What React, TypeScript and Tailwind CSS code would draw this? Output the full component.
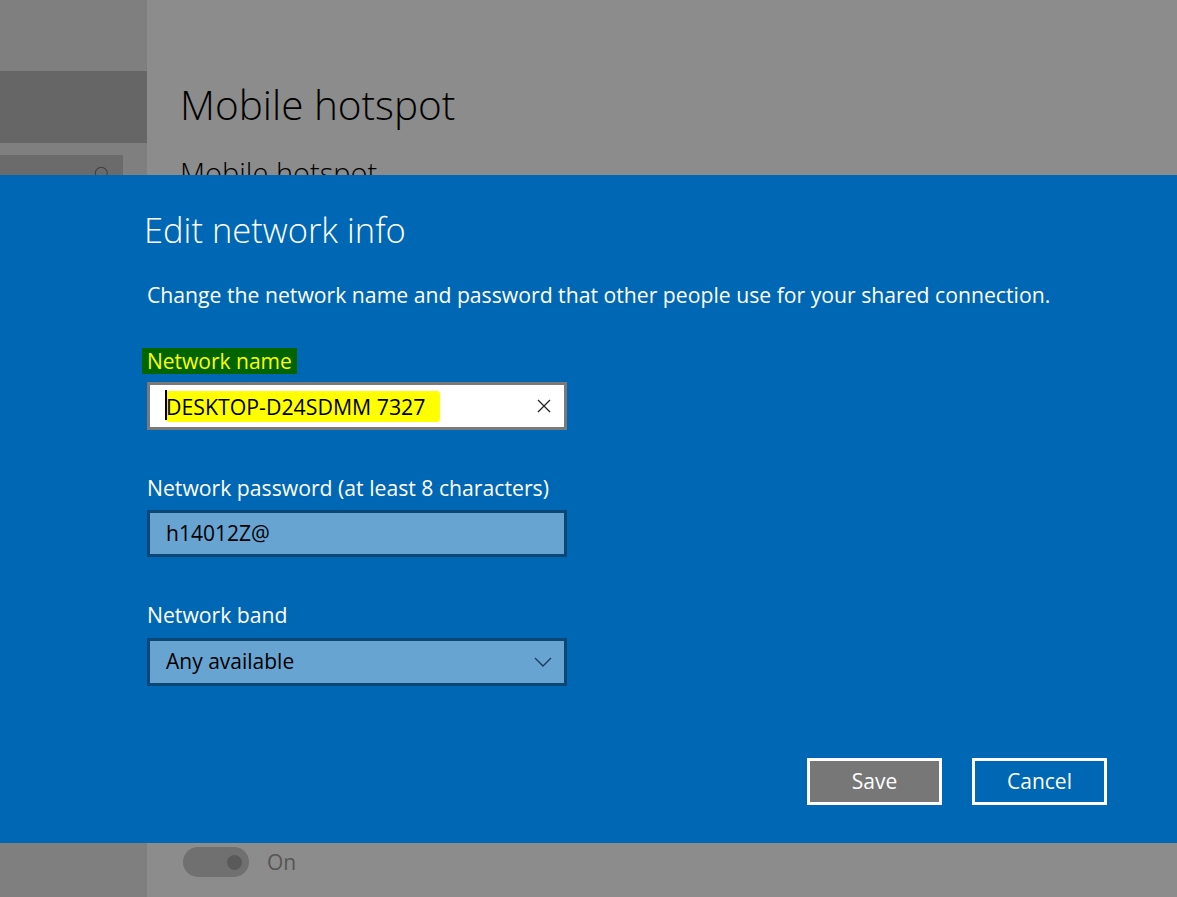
import { Search } from 'lucide-react';

const font = { fontFamily: '"Open Sans", "Noto Sans", sans-serif' };

function ClearIcon() {
  return (
    <svg width="14" height="14" viewBox="0 0 14 14" className="shrink-0">
      <path d="M1 1 L13 13 M13 1 L1 13" stroke="#222" strokeWidth="1.3" />
    </svg>
  );
}

function Chevron() {
  return (
    <svg width="18" height="10" viewBox="0 0 18 10" className="shrink-0">
      <path d="M1 1 L9 9 L17 1" stroke="#1b3a57" strokeWidth="1.3" fill="none" />
    </svg>
  );
}

export default function App() {
  return (
    <div className="relative flex h-[897px] w-[1177px] overflow-hidden" style={font}>
      {/* sidebar */}
      <div className="flex w-[147px] shrink-0 flex-col bg-[#7f7f7f]">
        <div className="mt-[71px] h-[72px] bg-[#666666]" />
        <div className="mt-[12px] flex h-[40px] w-[123px] items-start justify-end bg-[#6b6b6b] pr-[12px] pt-[10px]">
          <Search size={18} strokeWidth={1.4} className="text-[#3f3f3f]" />
        </div>
      </div>

      {/* page behind */}
      <div className="flex flex-1 flex-col bg-[#8c8c8c] pl-[33px] pb-[19px]">
        <h1 className="mt-[75px] text-[40.5px] font-light leading-[60px] text-black">Mobile hotspot</h1>
        <h2 className="mt-[20px] text-[29px] font-light leading-[36px] text-black">Mobile hotspot</h2>
        <div className="ml-[3px] mt-auto flex items-center gap-[18px]">
          <div className="flex h-[30px] w-[66px] items-center justify-end rounded-full bg-[#707070] pr-[7px]">
            <div className="h-[15px] w-[15px] rounded-full bg-[#5a5a5a]" />
          </div>
          <span className="text-[21px] text-[#555555]">On</span>
        </div>
      </div>

      {/* dialog */}
      <div className="absolute inset-x-0 top-[175px] flex h-[668px] flex-col bg-[#0067b4] pl-[147px] text-white">
        <h3 className="ml-[-3px] mt-[30px] text-[34.5px] font-light leading-[50px]">Edit network info</h3>
        <p className="mt-[26px] text-[21.2px] leading-[28px]">
          Change the network name and password that other people use for your shared connection.
        </p>

        <div className="ml-[-5px] mt-[39px] h-[26px] w-fit bg-[#006400] px-[5px] text-[21px] leading-[26px] text-[#ffff00]">
          Network name
        </div>
        <div className="mt-[8px] flex h-[48px] w-[420px] items-center border-[3px] border-[#7a7a7a] bg-white pl-[16px] pr-[13px]">
          <div className="relative flex flex-1 items-center">
            <span className="rounded-[3px] bg-[#ffff00] py-[3px] pr-[15px] text-[21.3px] leading-[25px] text-black">
              DESKTOP-D24SDMM 7327
            </span>
            <span className="absolute left-[-1px] top-[-1px] h-[30px] w-[2px] bg-black" />
          </div>
          <ClearIcon />
        </div>

        <div className="mt-[44px] text-[21.2px] leading-[28px]">Network password (at least 8 characters)</div>
        <div className="mt-[8px] flex h-[47px] w-[420px] items-center border-[3px] border-[#0b4675] bg-[#67a4d2] pl-[16px]">
          <span className="text-[21px] text-black">h14012Z@</span>
        </div>

        <div className="mt-[44px] text-[21.2px] leading-[28px]">Network band</div>
        <div className="mt-[9px] flex h-[48px] w-[420px] items-center justify-between border-[3px] border-[#0b4675] bg-[#67a4d2] pl-[16px] pr-[12px]">
          <span className="text-[21px] text-black">Any available</span>
          <Chevron />
        </div>

        <div className="ml-[660px] mt-[72px] flex gap-[30px]">
          <button className="h-[47px] w-[135px] border-[3px] border-white bg-[#777777] text-[21px] text-white">
            Save
          </button>
          <button className="h-[47px] w-[135px] border-[3px] border-white bg-[#0067b4] text-[21px] text-white">
            Cancel
          </button>
        </div>
      </div>
    </div>
  );
}
